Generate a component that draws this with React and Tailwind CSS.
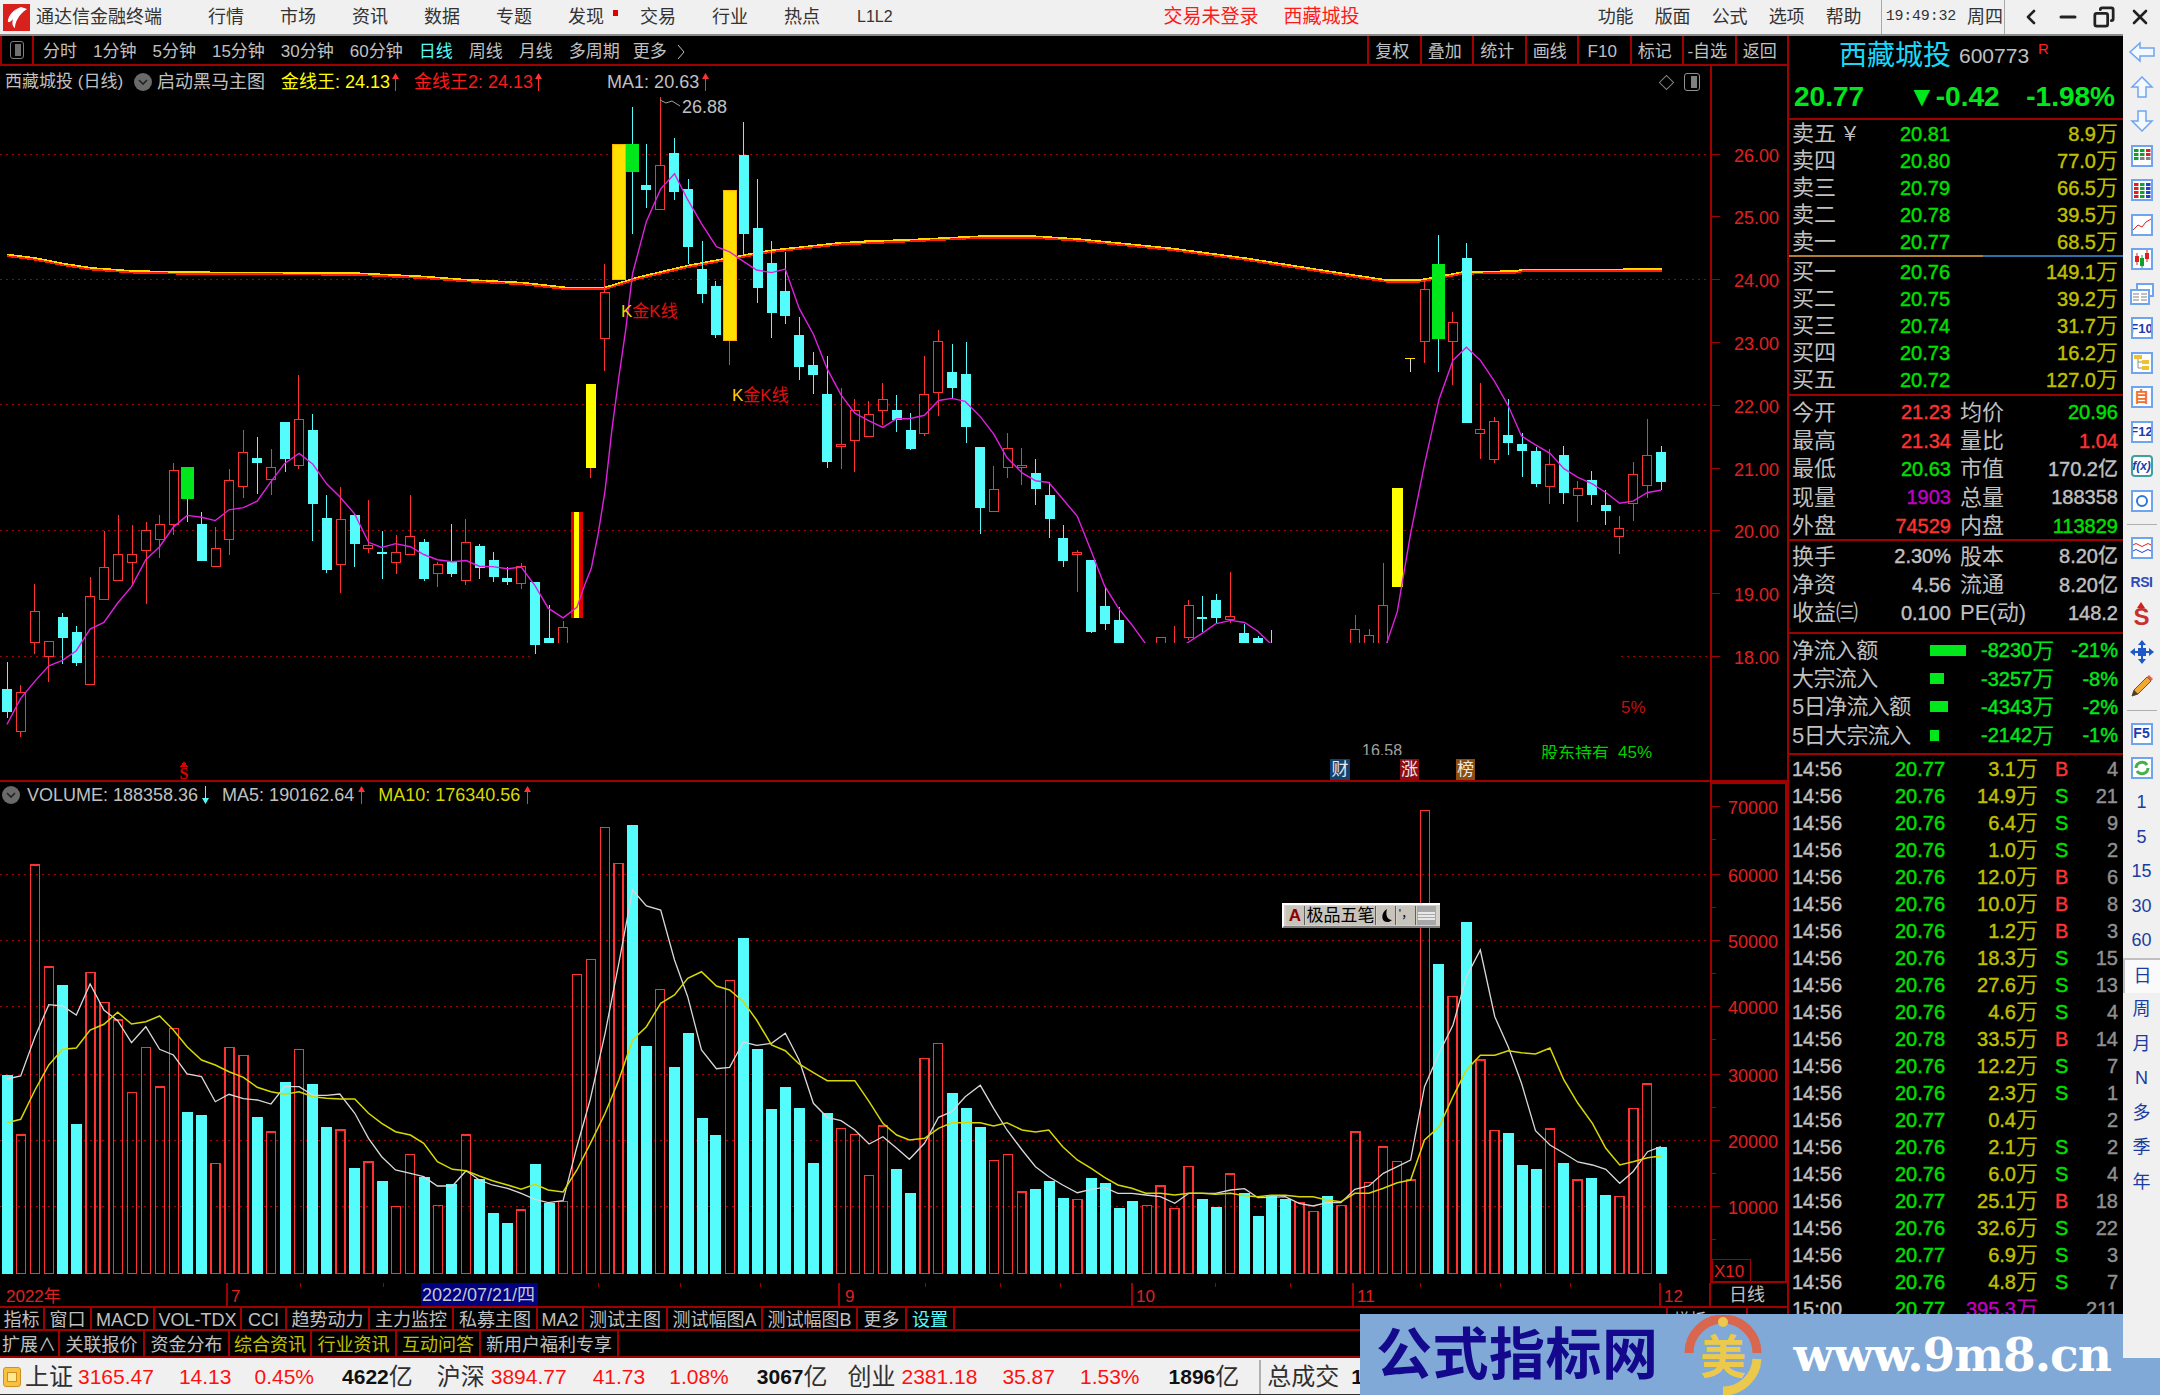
import React from 'react';
import { ChevronLeft, Minus, Copy, X } from 'lucide-react';

// candle data read off the chart: [index, high, top, bottom, low, kind]
// y values are in crop pixels, py() turns them into page pixels
const candles = [
  [0,1296,1358,1412,1425,'c'],[1,1348,1366,1456,1468,'r'],[2,1116,1179,1252,1278,'r'],[3,1247,1248,1284,1342,'r'],
  [4,1182,1192,1240,1300,'c'],[5,1213,1227,1298,1306,'c'],[6,1099,1145,1349,1349,'r'],[7,993,1079,1152,1152,'r'],
  [8,957,1048,1107,1107,'r'],[9,980,1048,1066,1115,'r'],[10,973,992,1038,1163,'r'],[11,957,979,1014,1056,'r'],
  [12,836,854,978,1004,'r'],[13,846,846,920,972,'g'],[14,950,978,1063,1063,'c'],[15,985,1034,1076,1076,'r'],
  [16,850,878,1014,1049,'r'],[17,760,812,892,918,'r'],[18,776,825,838,908,'c'],[19,804,847,875,911,'r'],
  [20,742,742,828,858,'c'],[21,635,736,842,850,'r'],[22,725,760,932,1018,'c'],[23,912,964,1084,1091,'c'],
  [24,892,968,1072,1138,'r'],[25,955,957,1024,1077,'c'],[26,922,1027,1034,1045,'r'],[27,995,1043,1048,1104,'c'],
  [28,1002,1044,1066,1094,'r'],[29,912,1006,1048,1048,'r'],[30,1012,1019,1105,1110,'c'],[31,1065,1072,1092,1122,'r'],
  [32,978,1066,1094,1100,'c'],[33,967,1020,1107,1118,'r'],[34,1025,1029,1080,1105,'c'],[35,1042,1060,1100,1112,'c'],
  [36,1078,1102,1112,1118,'c'],[37,1068,1076,1116,1128,'r'],[38,1112,1112,1257,1278,'c'],[39,1165,1240,1300,1300,'c'],
  [40,1202,1217,1300,1300,'r'],[41,950,950,1194,1200,'m'],[42,656,656,848,872,'y'],[43,378,445,550,626,'r'],
  [44,102,102,415,415,'o'],[45,15,102,166,308,'g'],[46,102,195,208,248,'c'],[47,-7,151,252,252,'r'],
  [48,88,123,212,230,'c'],[49,182,206,340,378,'c'],[50,325,389,447,468,'c'],[51,417,428,542,548,'c'],
  [52,209,209,554,612,'o'],[53,50,127,308,358,'c'],[54,182,296,434,468,'c'],[55,325,376,492,548,'c'],
  [56,350,440,498,516,'c'],[57,500,542,616,645,'c'],[58,580,611,634,677,'c'],[59,590,677,835,848,'c'],
  [60,665,795,795,850,'r'],[61,690,716,785,858,'r'],[62,695,726,776,778,'r'],[63,652,690,716,750,'r'],
  [64,680,715,738,765,'c'],[65,722,760,804,808,'c'],[66,590,678,768,775,'r'],[67,530,556,674,728,'r'],
  [68,562,628,664,688,'c'],[69,558,632,754,790,'c'],[70,800,800,942,1000,'c'],[71,843,898,948,948,'r'],
  [72,767,804,848,872,'r'],[73,803,843,847,888,'r'],[74,828,859,897,935,'c'],[75,880,912,966,1010,'c'],
  [76,980,1009,1063,1077,'c'],[77,1038,1043,1048,1135,'r'],[78,1060,1060,1226,1228,'c'],[79,1123,1167,1208,1222,'c'],
  [80,1170,1198,1300,1300,'c'],[83,1240,1240,1300,1300,'r'],[84,1212,1300,1300,1300,'r'],[85,1153,1165,1240,1245,'r'],
  [86,1143,1192,1194,1227,'c'],[87,1140,1154,1195,1205,'c'],[88,1088,1190,1198,1205,'r'],[89,1208,1230,1300,1300,'c'],
  [90,1235,1240,1300,1300,'c'],[91,1222,1300,1300,1300,'c'],[97,1188,1220,1300,1300,'r'],[98,1220,1234,1300,1300,'r'],
  [99,1068,1165,1300,1300,'r'],[100,894,894,1122,1122,'y'],[102,415,438,556,606,'r'],[103,312,378,551,628,'g'],
  [104,490,514,556,658,'r'],[105,330,365,745,745,'c'],[106,652,760,768,828,'r'],[107,732,742,830,838,'r'],
  [108,690,773,790,818,'c'],[109,768,794,810,870,'c'],[110,800,810,886,893,'c'],[111,804,840,892,932,'r'],
  [112,797,818,906,932,'c'],[113,878,895,912,973,'r'],[114,855,877,910,935,'c'],[115,900,933,948,980,'c'],
  [116,960,988,1006,1048,'r'],[117,835,864,930,970,'r'],[118,735,819,888,918,'r'],[119,797,811,880,900,'c'],
];

// volume bar tops, one per candle, r = hollow red, c = solid cyan
const volumes = [
  ['c',884],['r',1065],['r',255],['r',561],['c',614],['c',1032],['r',578],['r',668],['r',720],['r',938],
  ['r',803],['r',921],['r',745],['c',996],['c',1005],['r',1151],['r',803],['r',826],['c',1010],['r',1056],
  ['c',906],['r',808],['c',911],['c',1041],['r',1050],['c',1163],['r',1146],['c',1204],['r',1280],['r',1123],
  ['c',1192],['r',1276],['c',1213],['r',1065],['c',1198],['c',1298],['c',1329],['r',1290],['c',1153],['c',1268],
  ['r',1264],['r',583],['r',538],['r',142],['r',250],['c',136],['c',798],['r',628],['c',860],['c',758],
  ['c',1014],['c',1064],['r',601],['c',474],['c',806],['c',987],['c',920],['c',983],['c',1149],['c',1000],
  ['r',1046],['r',1064],['r',1186],['r',1038],['c',1167],['c',1240],['r',835],['r',790],['c',938],['c',983],
  ['c',1041],['r',1141],['r',1123],['r',1236],['c',1226],['c',1204],['c',1254],['r',1258],['c',1195],['c',1208],
  ['c',1284],['c',1262],['r',1276],['r',1218],['r',1285],['r',1159],['c',1257],['c',1280],['r',1182],['c',1240],
  ['c',1307],['c',1248],['c',1256],['r',1268],['r',1295],['c',1248],['r',1276],['r',1056],['r',1208],['r',1101],
  ['r',1145],['r',1200],['r',92],['c',551],['r',650],['c',425],['r',840],['r',1052],['c',1059],['c',1154],
  ['c',1167],['r',1047],['c',1150],['r',1200],['c',1195],['c',1245],['r',1250],['r',985],['r',912],['c',1100],
];

// line data per crop, first list is the left crop, second the right crop
const maPrice = [
  [[12,1440],[36,1380],[61,1340],[85,1305],[109,1292],[133,1270],[157,1220],[181,1205],[205,1160],[229,1122],[254,1060],[278,1030],[302,985],[326,958],[351,962],[375,970],[399,945],[424,940],[448,925],[472,880],[496,838],[521,815],[545,840],[569,885],[592,915],[618,955],[642,1020],[665,1032],[689,1023],[715,1030],[738,1048],[762,1060],[788,1065],[812,1062],[835,1075],[858,1076],[884,1081],[908,1077],[932,1120],[955,1172],[981,1194],[1005,1170],[1018,1120],[1030,1080],[1042,1000],[1054,900],[1066,760],[1078,640],[1090,530],[1102,400],[1126,280],[1151,205],[1175,170],[1198,230],[1222,285],[1248,338],[1271,350],[1295,372],[1318,392],[1344,398],[1368,390],[1392,480],[1417,540],[1441,620],[1465,680],[1489,722],[1514,740],[1538,755],[1562,735]],
  [[98,735],[123,727],[146,693],[168,688],[190,695],[215,730],[237,770],[259,825],[284,860],[306,878],[328,882],[351,920],[375,960],[398,1040],[420,1120],[442,1170],[465,1210],[488,1255],[500,1300],[530,1300],[553,1255],[581,1230],[603,1208],[628,1200],[651,1205],[673,1225],[695,1255],[720,1300],[860,1300],[885,1255],[903,1180],[925,1000],[948,840],[972,690],[995,600],[1017,570],[1040,600],[1064,650],[1086,705],[1108,775],[1131,795],[1155,815],[1178,850],[1201,870],[1225,885],[1247,905],[1270,930],[1292,925],[1316,905],[1338,900]],
];
const goldLine = [
  [[12,357],[60,365],[110,378],[160,388],[230,395],[330,398],[620,400],[740,408],[810,415],[910,422],[985,433],[1054,433],[1110,410],[1200,382],[1270,365],[1340,348],[1465,330],[1540,326]],
  [[0,328],[100,323],[215,315],[305,315],[380,322],[530,343],[650,365],[800,398],[885,416],[940,416],[1010,398],[1100,395],[1110,392],[1340,391]],
];
const ma5 = [
  [[12,897],[36,888],[61,770],[85,674],[109,678],[133,705],[157,612],[181,690],[205,722],[229,788],[254,740],[278,808],[302,825],[326,882],[351,890],[375,965],[399,943],[424,956],[448,960],[472,972],[496,920],[521,920],[545,946],[569,946],[592,942],[618,1000],[642,1075],[665,1130],[689,1170],[715,1180],[738,1190],[762,1218],[788,1218],[812,1172],[835,1200],[858,1215],[884,1225],[908,1240],[932,1258],[955,1268],[981,1262],[1005,1100],[1028,960],[1054,760],[1078,550],[1102,330],[1126,378],[1151,390],[1175,540],[1198,650],[1222,810],[1248,866],[1271,862],[1295,786],[1318,796],[1344,790],[1368,760],[1392,840],[1417,970],[1441,1012],[1465,1022],[1489,1050],[1514,1092],[1538,1070],[1562,1105]],
  [[98,1138],[123,1090],[146,1012],[168,995],[190,950],[215,916],[237,985],[259,1050],[284,1110],[306,1160],[328,1190],[351,1215],[375,1238],[398,1228],[420,1222],[442,1240],[465,1240],[488,1245],[512,1250],[536,1270],[559,1240],[581,1240],[603,1240],[628,1230],[651,1226],[673,1253],[695,1252],[718,1250],[741,1270],[764,1278],[787,1268],[810,1268],[833,1228],[856,1218],[880,1180],[903,1160],[925,1140],[948,920],[972,820],[995,735],[1017,590],[1040,510],[1064,710],[1086,800],[1108,910],[1131,1052],[1155,1095],[1178,1120],[1201,1146],[1225,1155],[1247,1168],[1270,1210],[1292,1175],[1316,1115],[1338,1100]],
];
const ma10 = [
  [[12,1028],[36,1018],[61,930],[85,855],[109,808],[133,804],[157,750],[181,733],[205,697],[229,732],[254,725],[278,708],[302,750],[326,800],[351,840],[375,855],[399,875],[424,892],[448,922],[472,935],[496,943],[521,935],[545,950],[569,955],[592,957],[618,957],[642,1000],[665,1030],[689,1055],[715,1065],[738,1090],[762,1145],[788,1168],[812,1172],[835,1188],[858,1202],[884,1215],[908,1228],[932,1213],[955,1230],[981,1236],[1005,1170],[1030,1085],[1054,1000],[1078,900],[1102,780],[1126,740],[1151,670],[1175,645],[1198,595],[1222,575],[1248,618],[1271,630],[1295,665],[1318,720],[1344,795],[1368,812],[1392,852],[1417,878],[1441,902],[1465,902],[1489,902],[1514,965],[1538,1030],[1562,1065]],
  [[98,1080],[123,1075],[146,1045],[168,1028],[190,1028],[215,1028],[237,1038],[259,1028],[284,1050],[306,1056],[328,1050],[351,1100],[375,1140],[398,1165],[420,1192],[442,1215],[465,1225],[488,1240],[512,1240],[536,1245],[559,1240],[581,1240],[603,1243],[628,1240],[651,1247],[673,1250],[695,1246],[718,1246],[741,1250],[764,1250],[787,1260],[810,1265],[833,1240],[856,1240],[880,1225],[903,1208],[925,1200],[948,1080],[972,1040],[995,950],[1017,870],[1040,826],[1064,826],[1086,812],[1108,818],[1131,822],[1155,804],[1178,900],[1201,970],[1225,1030],[1247,1105],[1270,1155],[1292,1145],[1316,1133],[1338,1128]],
];

const CYAN = '#54fcfc';
const RED = '#ff3232';
const DARK = '#a00000';

const cx = i => 7 + i * 13.9;
const py = z => 100 + z / 2.306;
const vy = z => 780 + z / 3;
const toPoints = ([left, right], fy) =>
  [...left.map(([x, y]) => `${(x / 1.742).toFixed(1)},${fy(y).toFixed(1)}`),
   ...right.map(([x, y]) => `${(850 + x / 1.65).toFixed(1)},${fy(y).toFixed(1)}`)].join(' ');

const priceLabels = ['26.00', '25.00', '24.00', '23.00', '22.00', '21.00', '20.00', '19.00', '18.00'];
const volLabels = [['70000',806],['60000',874],['50000',940],['40000',1006],['30000',1074],['20000',1140],['10000',1206]];

const Candle = ({ c }) => {
  const [i, hi, top, bot, lo, kind] = c;
  const x = cx(i);
  const [yh, yt, yb, yl] = [py(hi), py(top), py(bot), py(lo)];
  if (kind === 'r') {
    return (
      <g stroke={RED} fill="none">
        <line x1={x} x2={x} y1={yh} y2={yt} />
        <line x1={x} x2={x} y1={yb} y2={yl} />
        <rect x={x - 4.5} y={yt} width={9} height={Math.max(yb - yt, 1.5)} fill="#000" />
      </g>
    );
  }
  if (kind === 'c') {
    return (
      <g>
        <line x1={x} x2={x} y1={yh} y2={yl} stroke={CYAN} />
        <rect x={x - 5} y={yt} width={10} height={Math.max(yb - yt, 2)} fill={CYAN} />
      </g>
    );
  }
  if (kind === 'g') {
    return (
      <g>
        <line x1={x} x2={x} y1={yh} y2={yl} stroke={CYAN} />
        <rect x={x - 6.5} y={yt} width={13} height={yb - yt} fill="#00e81c" />
      </g>
    );
  }
  if (kind === 'y') {
    return (
      <g>
        <line x1={x} x2={x} y1={yb} y2={yl} stroke={RED} />
        <rect x={x - 5} y={yt} width={10.5} height={yb - yt} fill="#ffff00" />
      </g>
    );
  }
  if (kind === 'o') {
    return (
      <g>
        <line x1={x} x2={x} y1={yb} y2={yl} stroke={RED} />
        <rect x={x - 6} y={yt} width={12.5} height={yb - yt} fill="#ffe000" stroke="#ffb000" />
      </g>
    );
  }
  return (
    <g>
      <rect x={x - 6} y={yt} width={12} height={yb - yt} fill="#e00000" />
      <rect x={x - 2.5} y={yt} width={5} height={yb - yt} fill="#ffff00" />
    </g>
  );
};

const PriceChart = () => (
  <svg width="1787" height="714" viewBox="0 66 1787 714" shapeRendering="crispEdges" className="block">
    {[154, 279.5, 404.4, 530.6].map(y => (
      <line key={y} x1="0" x2="1710" y1={y} y2={y} stroke="#a00000" strokeDasharray="2 4" />
    ))}
    <line x1="0" x2="534" y1="656.4" y2="656.4" stroke="#a00000" strokeDasharray="2 4" />
    <line x1="1621" x2="1710" y1="656.4" y2="656.4" stroke="#a00000" strokeDasharray="2 4" />
    <polyline points={toPoints(goldLine, z => py(z) + 1.2)} fill="none" stroke="#ff1a00" strokeWidth="2" />
    <polyline points={toPoints(goldLine, z => py(z) - 0.4)} fill="none" stroke="#ffd800" strokeWidth="1.6" />
    {candles.map(c => <Candle key={c[0]} c={c} />)}
    <polyline points={toPoints(maPrice, py)} fill="none" stroke="#e020e0" strokeWidth="1.4" shapeRendering="auto" />
    {/* black block the capture left over the low part of the chart */}
    <rect x="542" y="643" width="1078" height="137" fill="#000" />
    <line x1="1410" x2="1410" y1="358" y2="372" stroke="#d8d8d8" />
    <line x1="1405" x2="1415" y1="358" y2="358" stroke="#ffe000" />
    <polyline points="660,100 666,103 672,101 680,106" fill="none" stroke="#a0a0a0" shapeRendering="auto" />
    <path d="M184 761 l-4 6 h8z" fill="#e00000" />
    <text x="184" y="779" fontSize="16" fontWeight="700" textAnchor="middle" fill="#e00000" fontFamily="'Liberation Serif', serif" shapeRendering="auto">S</text>
    <line x1="1711" x2="1711" y1="66" y2="780" stroke={DARK} strokeWidth="2" />
    {priceLabels.map((t, n) => {
      const y = 154 + n * 62.8;
      return (
        <g key={t}>
          <line x1="1711" x2="1720" y1={y} y2={y} stroke={DARK} />
          <text x="1734" y={y + 7.5} fontSize="18" fill="#e02020" shapeRendering="auto">{t}</text>
        </g>
      );
    })}
  </svg>
);

const VolumeChart = () => (
  <svg width="1787" height="501" viewBox="0 782 1787 501" shapeRendering="crispEdges" className="block">
    {volLabels.slice(1).map(([t, y]) => (
      <line key={t} x1="0" x2="1710" y1={y} y2={y} stroke="#a00000" strokeDasharray="2 4" />
    ))}
    {volumes.map(([kind, top], i) => (
      kind === 'c'
        ? <rect key={i} x={cx(i) - 5.5} y={vy(top)} width="11" height={vy(1481) - vy(top)} fill={CYAN} />
        : <rect key={i} x={cx(i) - 4.5} y={vy(top)} width="9" height={vy(1481) - vy(top)} fill="none" stroke={RED} strokeWidth="1.4" />
    ))}
    <polyline points={toPoints(ma5, vy)} fill="none" stroke="#d8d8d8" strokeWidth="1.3" shapeRendering="auto" />
    <polyline points={toPoints(ma10, vy)} fill="none" stroke="#d8d800" strokeWidth="1.5" shapeRendering="auto" />
    <rect x="1711" y="783" width="75" height="499" fill="none" stroke={DARK} strokeWidth="2" />
    {volLabels.map(([t, y]) => (
      <g key={t}>
        <line x1="1711" x2="1720" y1={y} y2={y} stroke={DARK} />
        <line x1="1711" x2="1716" y1={y + 33} y2={y + 33} stroke={DARK} />
        <text x="1728" y={y + 8} fontSize="18" fill="#e02020" shapeRendering="auto">{t}</text>
      </g>
    ))}
    <rect x="1712" y="1259" width="38" height="22" fill="none" stroke={DARK} />
    <text x="1714" y="1277" fontSize="17" fill="#e02020" shapeRendering="auto">X10</text>
  </svg>
);

const DateAxis = () => (
  <svg width="1787" height="23" viewBox="0 1283 1787 23" shapeRendering="crispEdges" className="block">
    <rect x="421" y="1283" width="117" height="23" fill="#000080" />
    {[227, 839, 1132, 1353, 1660, 1710].map(x => (
      <line key={x} x1={x} x2={x} y1="1283" y2="1306" stroke={DARK} strokeWidth="1.5" />
    ))}
    {[300, 383, 598, 680, 760, 925, 1000, 1060, 1215, 1290, 1420, 1500, 1570].map(x => (
      <line key={x} x1={x} x2={x} y1="1283" y2="1287" stroke={DARK} />
    ))}
    <g fontSize="17" fill="#e02020" shapeRendering="auto">
      <text x="6" y="1302">2022年</text>
      <text x="231" y="1302">7</text>
      <text x="845" y="1302">9</text>
      <text x="1136" y="1302">10</text>
      <text x="1357" y="1302">11</text>
      <text x="1664" y="1302">12</text>
    </g>
    <text x="422" y="1301" fontSize="18" fill="#c8c8c8" shapeRendering="auto">2022/07/21/四</text>
    <text x="1729" y="1301" fontSize="18" fill="#c0c0c0" shapeRendering="auto">日线</text>
  </svg>
);

const UpArrow = ({ color = RED }) => (
  <svg width="7" height="18" viewBox="0 0 7 18" className="shrink-0">
    <path d="M3.5 0 L7 6 H4 V18 H3 V6 H0Z" fill={color} />
  </svg>
);
const DownArrow = ({ color = CYAN }) => (
  <svg width="7" height="18" viewBox="0 0 7 18" className="shrink-0">
    <path d="M3.5 18 L7 12 H4 V0 H3 V12 H0Z" fill={color} />
  </svg>
);
const Dropdot = () => (
  <span className="w-[18px] h-[18px] rounded-full bg-[#6a6a6a] flex items-center justify-center shrink-0">
    <svg width="10" height="7" viewBox="0 0 10 7"><path d="M1 1 L5 5 L9 1" stroke="#222" strokeWidth="1.6" fill="none" /></svg>
  </span>
);

const MainPane = () => (
  <div className="relative h-[714px]">
    <PriceChart />
    <div className="absolute left-[5px] top-[5px] flex items-center h-[22px] text-[18px] whitespace-nowrap">
      <span className="w-[129px] text-[#c0c0c0] text-[17px]">西藏城投 (日线)</span>
      <Dropdot />
      <span className="ml-[5px] w-[124px] text-[#c0c0c0]">启动黑马主图</span>
      <span className="text-[#ffff00]">金线王: 24.13</span>
      <span className="ml-[2px]"><UpArrow /></span>
      <span className="ml-[15px] text-[#ff1a1a]">金线王2: 24.13</span>
      <span className="ml-[2px]"><UpArrow /></span>
      <span className="ml-[65px] text-[#c0c0c0]">MA1: 20.63</span>
      <span className="ml-[3px]"><UpArrow /></span>
    </div>
    <span className="absolute left-[682px] top-[28px] text-[18px] text-[#c0c0c0]">26.88</span>
    <div className="absolute left-[1661px] top-[7px] flex items-center gap-[12px]">
      <span className="w-[11px] h-[11px] border border-[#808080] rotate-45" />
      <span className="w-[16px] h-[18px] border border-[#909090] rounded-[3px] flex justify-end p-[2px]"><span className="w-[6px] bg-[#808080]" /></span>
    </div>
    <span className="absolute left-[621px] top-[233px] text-[17px] text-[#e01010] whitespace-nowrap"><span className="text-[#ffd000]">K</span>金K线</span>
    <span className="absolute left-[732px] top-[317px] text-[17px] text-[#e01010] whitespace-nowrap"><span className="text-[#ffd000]">K</span>金K线</span>
    <span className="absolute left-[1621px] top-[629px] text-[17px] text-[#c01010]">5%</span>
    <span className="absolute left-[1541px] top-[679px] w-[72px] text-[17px] text-[#00d000] h-[14px] overflow-hidden leading-[18px] whitespace-nowrap">股东持有</span>
    <span className="absolute left-[1618px] top-[674px] text-[17px] text-[#00d000]">45%</span>
    <span className="absolute left-[1362px] top-[676px] text-[16px] text-[#a0a0a0] h-[13px] overflow-hidden leading-[18px]">16.58</span>
    <span className="absolute left-[1330px] top-[693px] w-[20px] h-[21px] bg-[#14406e] text-[#e8e8e8] text-[17px] leading-[21px] text-center">财</span>
    <span className="absolute left-[1400px] top-[693px] w-[19px] h-[21px] bg-[#8c0c14] text-[#e8e8e8] text-[17px] leading-[21px] text-center">涨</span>
    <span className="absolute left-[1456px] top-[693px] w-[19px] h-[21px] bg-[#8c4c10] text-[#e8e8e8] text-[17px] leading-[21px] text-center">榜</span>
  </div>
);

const VolumePane = () => (
  <div className="relative h-[501px]">
    <VolumeChart />
    <div className="absolute left-[2px] top-[2px] flex items-center h-[22px] text-[18px] whitespace-nowrap">
      <Dropdot />
      <span className="ml-[7px] text-[#c0c0c0]">VOLUME: 188358.36</span>
      <span className="ml-[4px]"><DownArrow /></span>
      <span className="ml-[13px] text-[#c0c0c0]">MA5: 190162.64</span>
      <span className="ml-[4px]"><UpArrow /></span>
      <span className="ml-[13px] text-[#d8d800]">MA10: 176340.56</span>
      <span className="ml-[4px]"><UpArrow /></span>
    </div>
    {/* input method bar floating over the chart */}
    <div className="absolute left-[1282px] top-[121px] w-[158px] h-[25px] flex items-center gap-px bg-[#d4d0c8] border-t-2 border-l-2 border-white border-b-2 border-b-[#808080] px-[2px] text-[17px] text-black">
      <span className="w-[19px] h-[19px] bg-[#c8c4bc] text-[#900000] font-bold leading-[19px] text-center border-r border-[#606060]">A</span>
      <span className="w-[70px] h-[19px] bg-[#c8c4bc] leading-[19px] text-center border-r border-[#606060] whitespace-nowrap">极品五笔</span>
      <span className="w-[19px] h-[19px] bg-[#c8c4bc] border-r border-[#606060] flex items-center justify-center">
        <svg width="12" height="14" viewBox="0 0 12 14"><path d="M7 0 C2 3 1 9 4 12 C7 14 10 13 12 11 C8 11 5 7 7 0Z" fill="#000" /></svg>
      </span>
      <span className="w-[19px] h-[19px] bg-[#c8c4bc] border-r border-[#606060] text-[12px] leading-[16px] text-center">'，</span>
      <span className="w-[19px] h-[19px] bg-[#a8a8a8] flex flex-col justify-center gap-px px-[1px]">
        <span className="h-[2px] bg-[#e8e8e8]" /><span className="h-[2px] bg-[#e8e8e8]" /><span className="h-[2px] bg-[#e8e8e8]" />
      </span>
    </div>
  </div>
);

const tabsOne = [
  ['指标', 'w-[45px]'], ['窗口', 'w-[47px]'], ['MACD', 'w-[63px]'], ['VOL-TDX', 'w-[87px]'], ['CCI', 'w-[45px]'],
  ['趋势动力', 'w-[83px]'], ['主力监控', 'w-[84px]'], ['私募主图', 'w-[84px]'], ['MA2', 'w-[46px]'], ['测试主图', 'w-[84px]'],
  ['测试幅图A', 'w-[95px]'], ['测试幅图B', 'w-[95px]'], ['更多', 'w-[49px]'], ['设置', 'w-[48px] text-[#54fcfc]'],
];
const tabsTwo = [
  ['扩展∧', 'w-[60px]'], ['关联报价', 'w-[85px]'], ['资金分布', 'w-[85px]'], ['综合资讯', 'w-[82px] text-[#c0c000]'],
  ['行业资讯', 'w-[85px] text-[#c0c000]'], ['互动问答', 'w-[84px] text-[#c0c000]'], ['新用户福利专享', 'w-[138px]'],
];

const TabRow = ({ tabs, className, extra }) => (
  <div className={`flex bg-black border-b-2 border-[#a00000] text-[18px] text-[#c0c0c0] ${className}`}>
    {tabs.map(([label, cls]) => (
      <span key={label} className={`flex items-center justify-center border-r-2 border-[#a00000] whitespace-nowrap pt-[3px] ${cls}`}>{label}</span>
    ))}
    {extra}
  </div>
);

const periods = ['分时', '1分钟', '5分钟', '15分钟', '30分钟', '60分钟', '日线', '周线', '月线', '多周期'];
const tools = ['复权', '叠加', '统计', '画线', 'F10', '标记', '-自选', '返回'];

const Toolbar = () => (
  <div className="h-[30px] flex items-center bg-black border-b-2 border-[#a00000] text-[17px] text-[#c0c0c0] whitespace-nowrap">
    <span className="w-[34px] h-full border-x-2 border-[#a00000] flex items-center justify-center">
      <span className="w-[14px] h-[18px] border border-[#808080] rounded-[3px] flex justify-end p-[2px]"><span className="w-[6px] bg-[#707070]" /></span>
    </span>
    <div className="ml-[9px] pt-[3px] flex items-center gap-[16px]">
      {periods.map(p => (
        <span key={p} className={p === '日线' ? 'text-[#54fcfc]' : ''}>{p}</span>
      ))}
      <span className="-ml-[3px] flex items-center gap-[10px]">更多
        <svg width="8" height="16" viewBox="0 0 8 16"><path d="M1 1 L7 8 L1 15" stroke="#c0c0c0" fill="none" /></svg>
      </span>
    </div>
    <div className="ml-auto flex h-full">
      {tools.map(t => (
        <span key={t} className="w-[52.5px] flex items-center justify-center border-l-2 border-[#a00000] pt-[3px] pr-[4px]">{t}</span>
      ))}
    </div>
  </div>
);

const Logo = () => (
  <svg width="27" height="27" viewBox="0 0 27 27" className="shrink-0">
    <rect width="27" height="27" fill="#d8201c" />
    <path d="M18 3 C10 6 6 11 5 16 C4 20 8 18 10 15 C9 19 9 22 12 24 C12 19 15 11 24 5Z" fill="#fff" />
  </svg>
);

const menus = ['行情', '市场', '资讯', '数据', '专题', '发现', '交易', '行业', '热点'];

const TitleBar = () => (
  <div className="h-[36px] flex items-center bg-[#f0f0f0] border-b-2 border-[#8a8a8a] text-[18px] text-[#333] whitespace-nowrap pl-[3px]">
    <Logo />
    <span className="ml-[6px] w-[172px]">通达信金融终端</span>
    <div className="flex gap-[36px]">
      {menus.map(m => (
        <span key={m} className="relative w-[36px]">
          {m}
          {m === '发现' && <span className="absolute left-[45px] top-[6px] w-[5px] h-[6px] bg-[#e00000]" />}
        </span>
      ))}
    </div>
    <span className="ml-[37px] text-[16px] text-[#333]">L1L2</span>
    <span className="ml-[271px] text-[19px] text-[#ff1a1a]">交易未登录</span>
    <span className="ml-[25px] text-[19px] text-[#ff1a1a]">西藏城投</span>
    <div className="ml-[238px] flex gap-[21px]">
      {['功能', '版面', '公式', '选项', '帮助'].map(m => <span key={m} className="w-[36px]">{m}</span>)}
    </div>
    <span className="ml-[19px] w-[124px] h-full flex items-center border-x border-[#a8a8a8] pl-[4px]">
      <span className="text-[15px] font-['Liberation_Mono',monospace] tracking-[-0.2px]">19:49:32</span>
      <span className="ml-[11px]">周四</span>
    </span>
    <div className="ml-[14px] flex items-center gap-[13px] text-[#222]">
      <ChevronLeft size={24} strokeWidth={2.6} />
      <Minus size={24} strokeWidth={3} />
      <Copy size={22} strokeWidth={3} className="scale-x-[-1]" />
      <X size={24} strokeWidth={2.6} />
    </div>
  </div>
);

const book = [
  ['卖五', '20.81', '8.9'], ['卖四', '20.80', '77.0'], ['卖三', '20.79', '66.5'], ['卖二', '20.78', '39.5'], ['卖一', '20.77', '68.5'],
];
const bookBuy = [
  ['买一', '20.76', '149.1'], ['买二', '20.75', '39.2'], ['买三', '20.74', '31.7'], ['买四', '20.73', '16.2'], ['买五', '20.72', '127.0'],
];

const HEAVY = '[-webkit-text-stroke:0.4px]';

const BookRow = ({ row, yen }) => (
  <div className="h-[27px] flex items-center">
    <span className="w-[108px] text-[22px] text-[#c0c0c0] relative">
      {row[0]}
      {yen && <span className="ml-[4px] text-[20px]">￥</span>}
    </span>
    <span className={`text-[20px] text-[#00e000] ${HEAVY}`}>{row[1]}</span>
    <span className="ml-auto flex items-center text-[#c0c000]">
      <span className={`text-[20px] ${HEAVY}`}>{row[2]}</span><span className="text-[22px]">万</span>
    </span>
  </div>
);

const stats = [
  ['今开', '21.23', 'text-[#ff3232]', '均价', '20.96', 'text-[#00e000]'],
  ['最高', '21.34', 'text-[#ff3232]', '量比', '1.04', 'text-[#ff3232]'],
  ['最低', '20.63', 'text-[#00e000]', '市值', '170.2亿', 'text-[#c0c0c0]'],
  ['现量', '1903', 'text-[#c000c0]', '总量', '188358', 'text-[#c0c0c0]'],
  ['外盘', '74529', 'text-[#ff3232]', '内盘', '113829', 'text-[#00e000]'],
];
const statsTwo = [
  ['换手', '2.30%', 'text-[#c0c0c0]', '股本', '8.20亿', 'text-[#c0c0c0]'],
  ['净资', '4.56', 'text-[#c0c0c0]', '流通', '8.20亿', 'text-[#c0c0c0]'],
  ['收益㈢', '0.100', 'text-[#c0c0c0]', 'PE(动)', '148.2', 'text-[#c0c0c0]'],
];

const StatRow = ({ row }) => (
  <div className="h-[28.4px] flex items-center text-[#c0c0c0] whitespace-nowrap">
    <span className="w-[72px] text-[22px]">{row[0]}</span>
    <span className={`w-[87px] text-right text-[20px] ${HEAVY} ${row[2]}`}>{row[1]}</span>
    <span className="ml-[9px] w-[66px] text-[22px]">{row[3]}</span>
    <span className={`flex-1 text-right text-[20px] ${HEAVY} ${row[5]}`}>{row[4]}</span>
  </div>
);

const flows = [
  ['净流入额', 'w-[36px]', '-8230', '-21%'], ['大宗流入', 'w-[14px]', '-3257', '-8%'],
  ['5日净流入额', 'w-[18px]', '-4343', '-2%'], ['5日大宗流入', 'w-[9px]', '-2142', '-1%'],
];

const ticks = [
  ['14:56','20.77','3.1','B','4'],['14:56','20.76','14.9','S','21'],['14:56','20.76','6.4','S','9'],['14:56','20.76','1.0','S','2'],
  ['14:56','20.76','12.0','B','6'],['14:56','20.76','10.0','B','8'],['14:56','20.76','1.2','B','3'],['14:56','20.76','18.3','S','15'],
  ['14:56','20.76','27.6','S','13'],['14:56','20.76','4.6','S','4'],['14:56','20.78','33.5','B','14'],['14:56','20.76','12.2','S','7'],
  ['14:56','20.76','2.3','S','1'],['14:56','20.77','0.4','','2'],['14:56','20.76','2.1','S','2'],['14:56','20.76','6.0','S','4'],
  ['14:56','20.77','25.1','B','18'],['14:56','20.76','32.6','S','22'],['14:56','20.77','6.9','S','3'],['14:56','20.76','4.8','S','7'],
  ['15:00','20.77','395.3','','211'],
];

const QuotePanel = () => (
  <div className="w-[336px] shrink-0 bg-black border-l-2 border-[#a00000] whitespace-nowrap overflow-hidden">
    <div className="h-[84px] border-b-2 border-[#a00000]">
      <div className="h-[40px] flex items-center pl-[50px]">
        <span className="text-[28px] text-[#18d8f8] leading-none">西藏城投</span>
        <span className="ml-[8px] text-[21px] text-[#c0c0c0]">600773</span>
        <span className="ml-[9px] -mt-[14px] text-[15px] text-[#ff2020]">R</span>
      </div>
      <div className="h-[42px] flex items-center pl-[5px] pr-[8px] text-[#00e81c] font-bold text-[28px]">
        <span>20.77</span>
        <span className="ml-[44px]">▼-0.42</span>
        <span className="ml-auto">-1.98%</span>
      </div>
    </div>
    <div className="pl-[3px] pr-[5px]">
      {book.map((r, n) => <BookRow key={r[0]} row={r} yen={n === 0} />)}
    </div>
    <div className="h-[2px] flex">
      <span className="w-[194px] bg-[#b08030]" /><span className="flex-1 bg-[#2f6fa8]" />
    </div>
    <div className="pl-[3px] pr-[5px] pt-[1px]">
      {bookBuy.map(r => <BookRow key={r[0]} row={r} />)}
    </div>
    <div className="mt-[1px] h-[145px] border-t-2 border-[#a00000] pl-[3px] pr-[5px] pt-[2px]">
      {stats.map(r => <StatRow key={r[0]} row={r} />)}
    </div>
    <div className="h-[93px] border-t-2 border-[#a00000] pl-[3px] pr-[5px] pt-[1px]">
      {statsTwo.map(r => <StatRow key={r[0]} row={r} />)}
    </div>
    <div className="h-[121px] border-t-2 border-[#a00000] pl-[3px] pr-[5px] pt-[2px]">
      {flows.map(([label, bar, amount, pct]) => (
        <div key={label} className="h-[28.4px] flex items-center text-[#00e81c]">
          <span className="w-[138px] text-[22px] text-[#c0c0c0] tracking-[-0.6px]">{label}</span>
          <span className={`h-[11px] bg-[#00e81c] ${bar}`} />
          <span className="ml-auto flex items-center w-[137px]">
            <span className={`text-[20px] ${HEAVY}`}>{amount}</span><span className="text-[22px]">万</span>
            <span className={`ml-auto text-[20px] ${HEAVY}`}>{pct}</span>
          </span>
        </div>
      ))}
    </div>
    <div className="border-t-2 border-[#a00000] pl-[3px] pr-[5px]">
      {ticks.map(([time, price, qty, side, count], n) => (
        <div key={n} className={`h-[27px] flex items-center text-[20px] ${HEAVY}`}>
          <span className="w-[103px] text-[#c0c0c0]">{time}</span>
          <span className="w-[50px] text-[#00e000]">{price}</span>
          <span className={`w-[93px] flex items-center justify-end ${qty === '395.3' ? 'text-[#c000c0]' : 'text-[#c0c000]'}`}>
            {qty}<span className="text-[22px] [-webkit-text-stroke:0]">万</span>
          </span>
          <span className={`ml-[17px] w-[16px] ${side === 'B' ? 'text-[#ff3232]' : 'text-[#00e000]'}`}>{side}</span>
          <span className="flex-1 text-right text-[#909090]">{count}</span>
        </div>
      ))}
    </div>
  </div>
);

const BlueBox = ({ children, className = '' }) => (
  <span className={`w-[22px] h-[22px] bg-white border-2 border-[#6fa4ef] flex items-center justify-center overflow-hidden ${className}`}>{children}</span>
);
const Arrow = ({ d }) => (
  <svg width="28" height="24" viewBox="0 0 28 24"><path d={d} fill="#f4f8ff" stroke="#6fa4ef" strokeWidth="1.5" /></svg>
);
const Bars = ({ colors }) => (
  <svg width="18" height="18" viewBox="0 0 18 18">
    {colors.map((c, n) => <rect key={n} x={1 + (n % 3) * 6} y={2 + Math.floor(n / 3) * 4} width="4.5" height="3" fill={c} />)}
  </svg>
);

const sideGroups = [
  [
    <Arrow d="M2 12 L12 3 V8 H26 V16 H12 V21Z" />,
    <Arrow d="M14 2 L24 12 H18 V22 H10 V12 H4Z" />,
    <Arrow d="M14 22 L24 12 H18 V2 H10 V12 H4Z" />,
    <BlueBox><Bars colors={['#10a030','#10a030','#e02020','#10a030','#10a030','#e02020','#10a030','#808080','#808080']} /></BlueBox>,
    <BlueBox><Bars colors={['#e02020','#10a030','#2040d0','#e02020','#10a030','#2040d0','#e02020','#10a030','#2040d0','#e02020','#10a030','#2040d0']} /></BlueBox>,
    <BlueBox><svg width="18" height="18" viewBox="0 0 18 18"><path d="M0 14 L5 9 L9 11 L13 6 L18 3" stroke="#e02020" fill="none" /></svg></BlueBox>,
    <BlueBox>
      <svg width="18" height="18" viewBox="0 0 18 18">
        <rect x="2" y="6" width="4" height="6" fill="#e02020" /><path d="M4 3V15" stroke="#e02020" />
        <rect x="7" y="8" width="4" height="8" fill="#10a030" /><path d="M9 5V18" stroke="#10a030" />
        <rect x="12" y="3" width="4" height="6" fill="#e02020" /><path d="M14 0V12" stroke="#e02020" />
      </svg>
    </BlueBox>,
    <span className="relative block w-[24px] h-[22px]">
      <span className="absolute right-0 top-0 w-[18px] h-[14px] bg-white border-2 border-[#6fa4ef]" />
      <span className="absolute left-0 bottom-0 w-[20px] h-[16px] bg-white border-2 border-[#6fa4ef] flex items-center justify-center">
        <svg width="14" height="8" viewBox="0 0 14 8"><path d="M0 1H6M8 1H14M0 4H6M8 4H14M0 7H6M8 7H14" stroke="#808080" /></svg>
      </span>
    </span>,
    <BlueBox className="text-[13px] text-[#1a3cb0] font-bold">F10</BlueBox>,
    <BlueBox>
      <svg width="18" height="18" viewBox="0 0 18 18">
        <path d="M5 4V14H9M5 8H9" stroke="#909090" fill="none" />
        <rect x="1" y="1" width="8" height="4" fill="#f0c030" /><rect x="9" y="6" width="7" height="4" fill="#f0c030" /><rect x="9" y="12" width="7" height="4" fill="#f0c030" />
      </svg>
    </BlueBox>,
    <BlueBox className="text-[15px] text-[#f07030] font-bold">自</BlueBox>,
    <BlueBox className="text-[13px] text-[#1a3cb0] font-bold">F12</BlueBox>,
    <BlueBox className="border-[#40a0a0] rounded-[4px] text-[12px] italic text-[#1a3cb0] font-bold">f(x)</BlueBox>,
    <BlueBox><span className="w-[12px] h-[12px] rounded-full border-2 border-[#2a78d8]" /></BlueBox>,
  ],
  [
    <BlueBox>
      <svg width="18" height="18" viewBox="0 0 18 18">
        <path d="M0 6 Q3 3 6 6 T12 6 T18 6" stroke="#e02020" fill="none" />
        <path d="M0 12 Q3 9 6 12 T12 12 T18 12" stroke="#2040d0" fill="none" />
      </svg>
    </BlueBox>,
    <span className="text-[14px] font-bold text-[#3048b8] tracking-[-0.5px]">RSI</span>,
    <span className="relative text-[24px] leading-[24px] font-bold text-[#c83030] font-['Liberation_Sans']">S
      <span className="absolute left-[4px] -top-[3px] w-0 h-0 border-x-[4px] border-x-transparent border-b-[6px] border-b-[#d02020]" />
    </span>,
    <svg width="24" height="24" viewBox="0 0 24 24" fill="#1e58c8">
      <path d="M12 0 L16 5 H8Z M12 24 L16 19 H8Z M0 12 L5 8 V16Z M24 12 L19 8 V16Z" />
      <rect x="8" y="8" width="8" height="8" /><path d="M2 11h20v2H2zM11 2h2v20h-2z" />
    </svg>,
    <svg width="24" height="24" viewBox="0 0 24 24">
      <path d="M2 22 L4 16 L17 3 L21 7 L8 20Z" fill="#f0a830" stroke="#805010" />
      <path d="M17 3 L19 1 L23 5 L21 7Z" fill="#e06050" />
      <path d="M2 22 L4 16 L8 20Z" fill="#404040" />
    </svg>,
  ],
  [
    <BlueBox className="text-[14px] text-[#1a3cb0] font-bold">F5</BlueBox>,
    <BlueBox>
      <svg width="18" height="18" viewBox="0 0 18 18" fill="none" stroke="#48b048" strokeWidth="3">
        <path d="M3 9 A6 6 0 0 1 14 6" /><path d="M15 9 A6 6 0 0 1 4 12" />
      </svg>
    </BlueBox>,
  ],
];
const sideText = ['1', '5', '15', '30', '60', '日', '周', '月', 'N', '多', '季', '年'];

const SideBar = () => (
  <div className="flex-1 bg-[#f0f0f0] flex flex-col items-center -mt-[2px] pt-[1px] relative z-10 overflow-hidden">
    {sideGroups.map((group, g) => (
      <React.Fragment key={g}>
        {g > 0 && <span className="w-[30px] h-[1px] my-[6px] bg-[#b0b0b0] shrink-0" />}
        {group.map((item, n) => (
          <span key={n} className="h-[34.5px] flex items-center justify-center shrink-0">{item}</span>
        ))}
      </React.Fragment>
    ))}
    {sideText.map(t => (
      <span
        key={t}
        className={`w-full h-[34.5px] flex items-center justify-center shrink-0 text-[18px] text-[#1a3ca0] ${t === '日' ? 'bg-[#fafafa] border-l-2 border-t-2 border-[#c0c0c0]' : ''}`}
      >
        {t}
      </span>
    ))}
  </div>
);

const StatusBar = () => (
  <div className="h-[37px] flex items-center bg-[#f0f0f0] border-b border-[#303030] whitespace-nowrap text-[21px] text-[#ff1010] pt-[2px]">
    <span className="ml-[3px] w-[18px] h-[20px] rounded-[3px] bg-[#f8c040] border border-[#d09020] flex items-center justify-center">
      <span className="w-[10px] h-[10px] bg-[#ffe890] border border-[#d09020]" />
    </span>
    <span className="ml-[4px] text-[24px] text-[#303030]">上证</span>
    <span className="ml-[5px]">3165.47</span>
    <span className="ml-[25px]">14.13</span>
    <span className="ml-[23px]">0.45%</span>
    <span className="ml-[28px] font-bold text-[#101010]">4622</span>
    <span className="text-[24px] text-[#303030]">亿</span>
    <span className="ml-[24px] text-[24px] text-[#303030]">沪深</span>
    <span className="ml-[6px]">3894.77</span>
    <span className="ml-[26px]">41.73</span>
    <span className="ml-[24px]">1.08%</span>
    <span className="ml-[28px] font-bold text-[#101010]">3067</span>
    <span className="text-[24px] text-[#303030]">亿</span>
    <span className="ml-[20px] text-[24px] text-[#303030]">创业</span>
    <span className="ml-[6px]">2381.18</span>
    <span className="ml-[25px]">35.87</span>
    <span className="ml-[25px]">1.53%</span>
    <span className="ml-[29px] font-bold text-[#101010]">1896</span>
    <span className="text-[24px] text-[#303030]">亿</span>
    <span className="ml-[20px] h-full border-l-2 border-[#b0b0b0] pl-[6px] flex items-center text-[24px] text-[#303030]">总成交</span>
    <span className="ml-[12px] font-bold text-[#101010]">1</span>
  </div>
);

// site watermark pasted over the bottom right corner
const Banner = () => (
  <div className="absolute right-0 bottom-0 w-[800px] h-[81px] bg-[#80a9d7] flex items-center whitespace-nowrap">
    <span className="ml-[16px] text-[56px] leading-none font-bold text-[#14088c] tracking-[0.5px]">公式指标网</span>
    <svg width="80" height="80" viewBox="0 0 80 80" className="ml-[24px] shrink-0">
      <path d="M6 38 A34 34 0 0 1 74 38" fill="none" stroke="#d9664e" strokeWidth="9" />
      <path d="M74 44 A34 34 0 0 1 40 76" fill="none" stroke="#ecc94b" strokeWidth="9" />
      <text x="40" y="58" fontSize="46" fontWeight="700" textAnchor="middle" fill="#ecc94b">美</text>
      <circle cx="40" cy="7" r="5" fill="#ecc94b" />
    </svg>
    <span className="ml-[31px] text-[47px] leading-none font-bold text-white font-['DejaVu_Serif',serif] tracking-[-1px]">www.9m8.cn</span>
  </div>
);

const App = () => (
  <div className="relative w-[2160px] h-[1395px] overflow-hidden bg-black font-['Liberation_Sans','Noto_Sans_CJK_SC',sans-serif]">
    <TitleBar />
    <div className="flex h-[1322px]">
      <div className="w-[1787px] shrink-0 flex flex-col">
        <Toolbar />
        <MainPane />
        <div className="h-[2px] bg-[#a00000]" />
        <VolumePane />
        <DateAxis />
        <TabRow
          tabs={tabsOne}
          className="h-[25px] border-t-2"
          extra={
            <span className="ml-auto mr-[39px] w-[82px] border-x-2 border-[#a00000] flex items-start justify-center gap-[26px] text-[16px] overflow-hidden">
              <span>增板</span><span>↓</span>
            </span>
          }
        />
        <TabRow tabs={tabsTwo} className="h-[27px]" />
      </div>
      <QuotePanel />
      <SideBar />
    </div>
    <StatusBar />
    <Banner />
  </div>
);

export default App;
